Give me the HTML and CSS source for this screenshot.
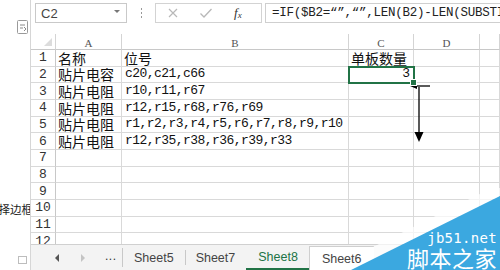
FILE: index.html
```html
<!DOCTYPE html>
<html>
<head>
<meta charset="utf-8">
<link rel="stylesheet" href="styles.css">
</head>
<body>
<div class="page">
  <div class="side">
    <div class="side-icon">
      <svg width="11" height="14" viewBox="0 0 11 14"><rect x="0.5" y="0.5" width="10" height="13" rx="1" fill="#fff" stroke="#9a9a9a"/><path d="M3 5h5M3 8h3M7 7l2 2-2 2" fill="none" stroke="#8a8a8a" stroke-width="1"/></svg>
    </div>
    <div class="side-text">选择边框</div>
    <div class="side-box"></div>
  </div>
  <div class="app">
    <div class="toolbar">
      <div class="namebox"><span class="ref">C2</span><span class="caret"></span></div>
      <div class="grip"><i></i><i></i><i></i></div>
      <div class="fxbox">
        <svg class="ico" width="12" height="12" viewBox="0 0 12 12"><path d="M2 2l8 8M10 2l-8 8" stroke="#b8b8b8" stroke-width="1.2"/></svg>
        <svg class="ico" width="14" height="12" viewBox="0 0 14 12"><path d="M1.5 6.5l3.5 3.5 7.5-8" fill="none" stroke="#b8b8b8" stroke-width="1.3"/></svg>
        <span class="fx">f<sub>x</sub></span>
      </div>
      <div class="formula">=IF($B2=“”,“”,LEN(B2)-LEN(SUBSTITUTE(B2,",",""))+1)</div>
    </div>
    <div class="sheet">
      <div class="grid">
        <div class="hd corner"><span class="tri"></span></div>
        <div class="hd">A</div><div class="hd">B</div><div class="hd">C</div><div class="hd">D</div><div class="hd"></div>

        <div class="rn">1</div><div class="c zh">名称</div><div class="c zh">位号</div><div class="c zh">单板数量</div><div class="c"></div><div class="c"></div>
        <div class="rn">2</div><div class="c zh">贴片电容</div><div class="c en">c20,c21,c66</div><div class="c num sel">3</div><div class="c"></div><div class="c"></div>
        <div class="rn">3</div><div class="c zh">贴片电阻</div><div class="c en">r10,r11,r67</div><div class="c"></div><div class="c"></div><div class="c"></div>
        <div class="rn">4</div><div class="c zh">贴片电阻</div><div class="c en">r12,r15,r68,r76,r69</div><div class="c"></div><div class="c"></div><div class="c"></div>
        <div class="rn">5</div><div class="c zh">贴片电阻</div><div class="c en">r1,r2,r3,r4,r5,r6,r7,r8,r9,r10</div><div class="c"></div><div class="c"></div><div class="c"></div>
        <div class="rn">6</div><div class="c zh">贴片电阻</div><div class="c en">r12,r35,r38,r36,r39,r33</div><div class="c"></div><div class="c"></div><div class="c"></div>
        <div class="rn">7</div><div class="c"></div><div class="c"></div><div class="c"></div><div class="c"></div><div class="c"></div>
        <div class="rn">8</div><div class="c"></div><div class="c"></div><div class="c"></div><div class="c"></div><div class="c"></div>
        <div class="rn">9</div><div class="c"></div><div class="c"></div><div class="c"></div><div class="c"></div><div class="c"></div>
        <div class="rn">10</div><div class="c"></div><div class="c"></div><div class="c"></div><div class="c"></div><div class="c"></div>
        <div class="rn">11</div><div class="c"></div><div class="c"></div><div class="c"></div><div class="c"></div><div class="c"></div>
        <div class="rn">12</div><div class="c"></div><div class="c"></div><div class="c"></div><div class="c"></div><div class="c"></div>
      </div>
    </div>
    <div class="tabs">
      <div class="nav">
        <span class="tri-l"></span>
        <span class="tri-r"></span>
        <span class="dots">...</span>
      </div>
      <div class="tab">Sheet5</div>
      <div class="tab">Sheet7</div>
      <div class="tab active">Sheet8</div>
      <div class="tab drag">Sheet6</div>
    </div>
  </div>

  <svg class="arrows" width="24" height="64" viewBox="0 0 24 64">
    <path d="M4 4H20" stroke="#000" stroke-width="1.3"/>
    <path d="M0 4L7 1V7Z" fill="#000"/>
    <path d="M9 5V52" stroke="#000" stroke-width="1.3"/>
    <path d="M4.5 50H13.5L9 60Z" fill="#000"/>
  </svg>

  <div class="watermark">
    <svg width="175" height="82" viewBox="0 0 175 82">
      <path d="M44 73L175 8V-4L44 61Z" fill="#fff" fill-opacity="0.7"/>
      <path d="M26 82L175 8V82Z" fill="#3ba8e0"/>
    </svg>
    <div class="wm-text">
      <div class="wm-url">jb51.net</div>
      <div class="wm-name">脚本之家</div>
    </div>
  </div>
</div>
</body>
</html>
```
FILE: styles.css
```css
* { box-sizing: border-box; margin: 0; padding: 0; }
html, body { width: 500px; height: 270px; overflow: hidden; background: #fff; }
body { font-family: "Liberation Sans", Arial, sans-serif; }

.page { position: relative; display: flex; width: 500px; height: 270px; overflow: hidden; }

.side { width: 30px; flex: none; display: flex; flex-direction: column; overflow: hidden; }
.side-icon { margin: 20px 0 0 17px; height: 14px; }
.side-icon svg { display: block; }
.side-text { margin: 168px 0 0 -13px; white-space: nowrap; font-family: "Noto Sans CJK SC", sans-serif; font-size: 11.5px; line-height: 14px; color: #222; }
.side-box { margin: 40px 0 0 18px; width: 9px; height: 8px; border: 1px solid #bdbdbd; }

.app { flex: 1; display: flex; flex-direction: column; border-left: 1px solid #d6d6d6; min-width: 0; }

.toolbar { height: 34px; flex: none; display: flex; align-items: flex-start; padding: 3px 0 0 4px; }
.namebox { width: 92px; height: 20px; border: 1px solid #c9c9c9; display: flex; align-items: center; justify-content: space-between; padding: 0 6px 0 5px; }
.ref { font-size: 13px; color: #444; font-family: "Liberation Sans", sans-serif; }
.caret { width: 0; height: 0; border-left: 3px solid transparent; border-right: 3px solid transparent; border-top: 3px solid #777; margin-bottom: 4px; }
.grip { width: 28px; height: 20px; display: flex; flex-direction: column; align-items: center; justify-content: center; gap: 2px; }
.grip i { display: block; width: 1px; height: 2px; background: #999; }
.fxbox { width: 107px; height: 20px; border: 1px solid #d3d3d3; display: flex; align-items: center; padding: 0 0 0 11px; gap: 20px; }
.ico { display: block; }
.fx { font-family: "Liberation Serif", serif; font-style: italic; font-size: 13px; color: #333; margin-left: 1px; }
.fx sub { font-size: 9px; vertical-align: -1px; }
.formula { flex: 1; margin-left: 3px; height: 20px; border: 1px solid #cfcfcf; border-right: none; padding-left: 6px; white-space: nowrap; overflow: hidden; font-family: "Liberation Mono", monospace; font-size: 12.5px; letter-spacing: -0.25px; line-height: 19px; color: #222; }

.sheet { flex: 1; overflow: hidden; min-height: 0; }
.grid { display: grid; grid-template-columns: 25px 66px 227px 65px 66px 1fr; grid-template-rows: 16px; grid-auto-rows: 16.67px; }
.hd { border-right: 1px solid #d4d4d4; border-bottom: 1px solid #c8c8c8; display: flex; align-items: center; justify-content: center; font-family: "Liberation Serif", serif; font-size: 11px; color: #555; padding-top: 2px; }
.corner { position: relative; }
.tri { position: absolute; right: 3px; bottom: 3px; width: 0; height: 0; border-left: 8px solid transparent; border-bottom: 8px solid #dcdcdc; }
.rn { border-right: 1px solid #c8c8c8; border-bottom: 1px solid #d9d9d9; display: flex; align-items: center; justify-content: center; font-family: "Liberation Mono", monospace; font-size: 13px; line-height: 14px; color: #333; padding-top: 1px; }
.c { border-right: 1px solid #d9d9d9; border-bottom: 1px solid #d9d9d9; display: flex; align-items: center; white-space: nowrap; color: #111; padding-left: 3px; position: relative; line-height: 14px; }
.zh { font-family: "Noto Sans CJK SC", sans-serif; font-size: 14px; line-height: 14px; padding-left: 2px; }
.en { font-family: "Liberation Mono", monospace; font-size: 13px; letter-spacing: -0.55px; }
.num { justify-content: flex-end; padding-right: 3px; font-family: "Liberation Mono", monospace; font-size: 13px; }
.sel { outline: 2px solid #217346; outline-offset: -1px; z-index: 1; }
.sel::after { content: ""; position: absolute; right: -4px; bottom: -4px; width: 5px; height: 5px; background: #217346; border: 1px solid #fff; }

.tabs { height: 26px; flex: none; display: flex; align-items: stretch; background: #f3f3f3; border-top: 1px solid #d0d0d0; font-size: 12.5px; color: #444; }
.nav { width: 92px; display: flex; align-items: center; padding-left: 24px; border-right: 1px solid #c8c8c8; margin: 3px 0; }
.tri-l { width: 0; height: 0; border-top: 4px solid transparent; border-bottom: 4px solid transparent; border-right: 4px solid #555; }
.tri-r { width: 0; height: 0; border-top: 4px solid transparent; border-bottom: 4px solid transparent; border-left: 4px solid #c4c4c4; margin-left: 22px; }
.dots { margin-left: 20px; font-size: 12px; color: #333; letter-spacing: 0.5px; margin-top: -3px; }
.tab { display: flex; align-items: center; padding: 0 11px; font-family: "Liberation Sans", sans-serif; color: #444; position: relative; }
.tab + .tab::before { content: ""; position: absolute; left: 0; top: 5px; bottom: 5px; width: 1px; background: #c8c8c8; }
.active { color: #217346; padding: 0 11px 0 12px; border-bottom: 2px solid #217346; }
.active::before { display: none; }
.drag { background: #fff; border-left: 1px solid #cfcfcf; border-top: 1px solid #cfcfcf; margin-top: 1px; padding: 0 12px; }
.drag::before { display: none; }

.arrows { position: absolute; left: 410px; top: 82px; }

.watermark { position: absolute; right: 0; bottom: 0; width: 175px; height: 82px; }
.watermark svg { position: absolute; left: 0; top: 0; }
.wm-text { position: absolute; right: 3px; bottom: 1px; text-align: right; color: #fff; }
.wm-url { font-family: "DejaVu Sans Mono", monospace; font-size: 14px; line-height: 14px; letter-spacing: 0.3px; }
.wm-name { font-family: "Noto Sans CJK SC", sans-serif; font-size: 22px; line-height: 24px; letter-spacing: 0.5px; }
```
